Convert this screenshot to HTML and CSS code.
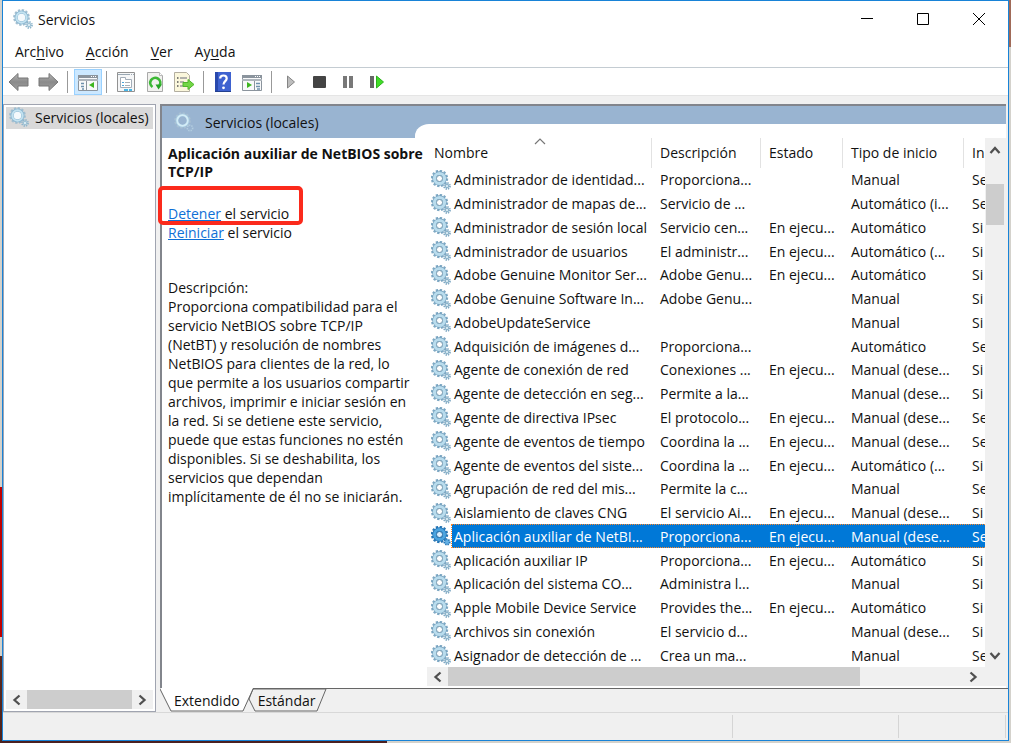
FILE: index.html
```
<!DOCTYPE html>
<html lang="es">
<head>
<meta charset="utf-8">
<title>Servicios</title>
<link rel="stylesheet" href="styles.css">
</head>
<body>
<svg class="defs" aria-hidden="true">
  <defs>
    <linearGradient id="arrowfill" x1="0" y1="0" x2="0" y2="1"><stop offset="0" stop-color="#b5b5b5"/><stop offset="0.5" stop-color="#8a8a8a"/><stop offset="1" stop-color="#a0a0a0"/></linearGradient>
    <symbol id="gear" viewBox="0 0 20 20">
      <circle cx="8.500" cy="8.500" r="7.500" fill="none" stroke="#7fa9c4" stroke-width="2.400" stroke-dasharray="2.300 1.627"/>
      <circle cx="8.500" cy="8.500" r="5" fill="none" stroke="#6f9cba" stroke-width="4.400"/>
      <circle cx="8.500" cy="8.500" r="5" fill="none" stroke="#b9dced" stroke-width="3.200"/>
      <circle cx="8.500" cy="8.500" r="3" fill="#fff" stroke="#7296ae" stroke-width="0.900"/>
      <circle cx="16" cy="16" r="3" fill="none" stroke="#7fa9c4" stroke-width="1.800" stroke-dasharray="1.300 1.056"/>
      <circle cx="16" cy="16" r="1.700" fill="#e4f2f8" stroke="#8db4ca" stroke-width="1.200"/>
    </symbol>
    <symbol id="gear-sel" viewBox="0 0 20 20">
      <circle cx="8.500" cy="8.500" r="7.500" fill="none" stroke="#2877b5" stroke-width="2.400" stroke-dasharray="2.300 1.627"/>
      <circle cx="8.500" cy="8.500" r="5" fill="none" stroke="#1d6fb3" stroke-width="4.400"/>
      <circle cx="8.500" cy="8.500" r="5" fill="none" stroke="#4ba4df" stroke-width="3"/>
      <circle cx="8.500" cy="8.500" r="3" fill="#d9efff" stroke="#20679f" stroke-width="0.900"/>
      <circle cx="16" cy="16" r="2.700" fill="#65b0e4" stroke="#2877b5" stroke-width="1.800" stroke-dasharray="1.300 1"/>
    </symbol>
    <symbol id="gear-soft" viewBox="0 0 20 20">
      <circle cx="8.500" cy="8.500" r="7.300" fill="none" stroke="#a3bfd0" stroke-width="2.200" stroke-dasharray="2.300 1.522"/>
      <circle cx="8.500" cy="8.500" r="5.400" fill="#f4f9fc" stroke="#8db8d2" stroke-width="3.200"/>
      <circle cx="8.500" cy="8.500" r="5.200" fill="none" stroke="#c3e2f0" stroke-width="1.900"/>
      <circle cx="16" cy="16" r="3" fill="none" stroke="#8fb5cc" stroke-width="1.800" stroke-dasharray="1.300 1.056"/>
      <circle cx="16" cy="16" r="1.700" fill="#e4f2f8" stroke="#9fc3d6" stroke-width="1.200"/>
    </symbol>
    <symbol id="gear-banner" viewBox="0 0 20 20">
      <circle cx="8.500" cy="8.500" r="7.300" fill="none" stroke="#a9bfd2" stroke-width="2" stroke-dasharray="2.300 1.522"/>
      <circle cx="8.500" cy="8.500" r="5.600" fill="none" stroke="#a4c8de" stroke-width="3"/>
      <circle cx="8.500" cy="8.500" r="5.300" fill="none" stroke="#d3ecf7" stroke-width="1.800"/>
      <circle cx="16" cy="16" r="2.700" fill="none" stroke="#b3cde0" stroke-width="1.600" stroke-dasharray="1.300 1"/>
    </symbol>
    <symbol id="chev-left" viewBox="0 0 10 12"><path d="M7.500 1.500 2.500 6l5 4.500" fill="none" stroke="#505050" stroke-width="2.300"/></symbol>
    <symbol id="chev-right" viewBox="0 0 10 12"><path d="M1.500 1.500 6.500 6l-5 4.500" fill="none" stroke="#505050" stroke-width="2.300"/></symbol>
  </defs>
</svg>
<main class="window">
  <header class="titlebar">
    <svg class="gear"><use href="#gear-soft"/></svg>
    <h1 class="title">Servicios</h1>
    <button class="caption" aria-label="Minimizar"><svg width="14" height="14"><path d="M1 6.500h12" stroke="#000"/></svg></button>
    <button class="caption" aria-label="Maximizar"><svg width="14" height="14"><path d="M1.500 1.500h11v11h-11z" fill="none" stroke="#000"/></svg></button>
    <button class="caption" aria-label="Cerrar"><svg width="14" height="14"><path d="M1 1l12 12M13 1 1 13" stroke="#000"/></svg></button>
  </header>
  <nav class="menubar">
    <button class="menu">Arc<u>h</u>ivo</button>
    <button class="menu"><u>A</u>cción</button>
    <button class="menu"><u>V</u>er</button>
    <button class="menu">Ay<u>u</u>da</button>
  </nav>
  <div class="toolbar">
    <button class="tool" aria-label="Atrás"><svg width="22" height="20"><path d="M1 10 10 1.500V6h10v8H10v4.500z" fill="url(#arrowfill)" stroke="#777"/></svg></button>
    <button class="tool" aria-label="Adelante"><svg width="22" height="20"><path d="M21 10 12 1.500V6H2v8h10v4.500z" fill="url(#arrowfill)" stroke="#777"/></svg></button>
    <span class="divider"></span>
    <button class="tool pressed" aria-label="Árbol de consola"><svg width="22" height="20"><path d="M1.500 3.500h19v15h-19z" fill="#f8f9fa" stroke="#8b949d"/><path d="M1 3h20v3H1z" fill="#8b949d"/><path d="M14 4.500h1m1 0h1m1 0h1" stroke="#fff"/><path d="M1 8h20" stroke="#aeb5bc" stroke-width="2"/><path d="M9.500 9v9" stroke="#8b949d"/><path d="M4 11.500h3M4 14.500h3M5 17h2" stroke="#6e91ad" stroke-width="1.500"/><path d="M17 10v6l-5-3z" fill="#3eb620"/></svg></button>
    <span class="divider"></span>
    <button class="tool" aria-label="Propiedades"><svg width="22" height="20"><path d="M2.500.500h17v19h-17z" fill="#f5f6f7" stroke="#929292"/><path d="M3 2.500h12M16 2.500h1m1 0h1" stroke="#9aa8b3"/><path d="M5.500 5.500h5v2h6v8h-11z" fill="#fff" stroke="#a3adb8"/><path d="M7 10.500h2M7 13.500h2" stroke="#4ba5d9"/><path d="M10 10.500h5M10 13.500h5" stroke="#a8afb6"/><path d="M9 18h4M14 18h3" stroke="#48b7e8" stroke-width="2"/></svg></button>
    <button class="tool" aria-label="Actualizar"><svg width="22" height="20"><path d="M3.500.500h12l3 3v16h-15z" fill="#f1f1ee" stroke="#a9a9a9"/><path d="M15.500.500v3h3" fill="#fff" stroke="#bbb"/><path d="M8.500 15A5 5 0 1 1 15.500 13.500" fill="none" stroke="#3cb835" stroke-width="2.700"/><path d="M11.500 12.500h6.500l-3.500 5z" fill="#27a427"/></svg></button>
    <button class="tool" aria-label="Exportar lista"><svg width="22" height="20"><path d="M1.500.500h12l3 3v16h-15z" fill="#fbf7dc" stroke="#b3aea0"/><path d="M4 6h1.500M4 10h1.500M4 14h1.500" stroke="#555" stroke-width="1.500"/><path d="M7 6h7M7 10h4M7 14h5" stroke="#9a9a9a" stroke-width="1.500"/><path d="M10 10.500h5V7.500l6 5-6 5v-3h-5z" fill="#72d645" stroke="#4fb52c"/></svg></button>
    <span class="divider"></span>
    <button class="tool" aria-label="Ayuda"><svg width="22" height="20"><path d="M3 0h16v20H3z" fill="#3e62d0"/><path d="M3 0h3v20H3z" fill="#2949ad"/><path d="M3 19.500h16" stroke="#23408f"/><path d="M8.200 6.500c0-4 6.500-4 6.500 0 0 2.500-3.200 2.800-3.200 6" fill="none" stroke="#fff" stroke-width="2.200"/><circle cx="11.500" cy="15.800" r="1.400" fill="#fff"/></svg></button>
    <button class="tool" aria-label="Panel de acciones"><svg width="22" height="20"><path d="M1.500 3.500h19v15h-19z" fill="#f8f9fa" stroke="#8b949d"/><path d="M1 3h20v3H1z" fill="#8b949d"/><path d="M14 4.500h1m1 0h1m1 0h1" stroke="#fff"/><path d="M1 8h20" stroke="#aeb5bc" stroke-width="2"/><path d="M13.500 9v9" stroke="#8b949d"/><path d="M15 11.500h4M15 14.500h4M16 17h3" stroke="#6e91ad" stroke-width="1.500"/><path d="M6 10v6l5-3z" fill="#3eb620"/></svg></button>
    <span class="divider"></span>
    <button class="tool" aria-label="Iniciar servicio"><svg width="22" height="20"><path d="M7.500 4v12l7-6z" fill="#bdbdbd" stroke="#858585"/></svg></button>
    <button class="tool" aria-label="Detener servicio"><svg width="22" height="20"><rect x="4" y="4" width="13" height="12" rx="1" fill="#444"/></svg></button>
    <button class="tool" aria-label="Pausar servicio"><svg width="22" height="20"><path d="M5 4h4v12H5zM11 4h4v12h-4z" fill="#787878"/></svg></button>
    <button class="tool" aria-label="Reiniciar servicio"><svg width="22" height="20"><path d="M3 4h4v12H3z" fill="#666"/><path d="M9.500 4v12l7-6z" fill="#41dc27" stroke="#2bb31b"/></svg></button>
  </div>
  <div class="panes">
    <aside class="tree">
      <div class="node"><svg class="gear"><use href="#gear-soft"/></svg><span>Servicios (locales)</span></div>
      <div class="hscroll">
        <button class="arrow" aria-label="Izquierda"><svg width="10" height="12"><use href="#chev-left"/></svg></button>
        <span class="thumb"></span>
        <button class="arrow" aria-label="Derecha"><svg width="10" height="12"><use href="#chev-right"/></svg></button>
      </div>
    </aside>
    <section class="right">
      <div class="content">
        <div class="banner"><svg class="gear"><use href="#gear-banner"/></svg><h2>Servicios (locales)</h2></div>
        <article class="info">
          <h3>Aplicación auxiliar de NetBIOS sobre<br>TCP/IP</h3>
          <p class="action marked"><a href="#">Detener</a> el servicio</p>
          <p class="action"><a href="#">Reiniciar</a> el servicio</p>
          <p class="about">Descripción:<br>Proporciona compatibilidad para el<br>servicio NetBIOS sobre TCP/IP<br>(NetBT) y resolución de nombres<br>NetBIOS para clientes de la red, lo<br>que permite a los usuarios compartir<br>archivos, imprimir e iniciar sesión en<br>la red. Si se detiene este servicio,<br>puede que estas funciones no estén<br>disponibles. Si se deshabilita, los<br>servicios que dependan<br>implícitamente de él no se iniciarán.</p>
        </article>
        <div class="list">
          <table class="services">
            <thead><tr><th class="sorted">Nombre<svg class="sort" width="12" height="7"><path d="M1 6l5-5 5 5" fill="none" stroke="#777" stroke-width="1.200"/></svg></th><th>Descripción</th><th>Estado</th><th>Tipo de inicio</th><th>In</th></tr></thead>
            <tbody>
              <tr><td><svg class="gear"><use href="#gear"/></svg>Administrador de identidad...</td><td>Proporciona...</td><td></td><td>Manual</td><td>Se</td></tr>
              <tr><td><svg class="gear"><use href="#gear"/></svg>Administrador de mapas de...</td><td>Servicio de ...</td><td></td><td>Automático (i...</td><td>Se</td></tr>
              <tr><td><svg class="gear"><use href="#gear"/></svg>Administrador de sesión local</td><td>Servicio cen...</td><td>En ejecu...</td><td>Automático</td><td>Si</td></tr>
              <tr><td><svg class="gear"><use href="#gear"/></svg>Administrador de usuarios</td><td>El administr...</td><td>En ejecu...</td><td>Automático (...</td><td>Si</td></tr>
              <tr><td><svg class="gear"><use href="#gear"/></svg>Adobe Genuine Monitor Ser...</td><td>Adobe Genu...</td><td>En ejecu...</td><td>Automático</td><td>Si</td></tr>
              <tr><td><svg class="gear"><use href="#gear"/></svg>Adobe Genuine Software In...</td><td>Adobe Genu...</td><td></td><td>Manual</td><td>Si</td></tr>
              <tr><td><svg class="gear"><use href="#gear"/></svg>AdobeUpdateService</td><td></td><td></td><td>Manual</td><td>Si</td></tr>
              <tr><td><svg class="gear"><use href="#gear"/></svg>Adquisición de imágenes d...</td><td>Proporciona...</td><td></td><td>Automático</td><td>Se</td></tr>
              <tr><td><svg class="gear"><use href="#gear"/></svg>Agente de conexión de red</td><td>Conexiones ...</td><td>En ejecu...</td><td>Manual (dese...</td><td>Si</td></tr>
              <tr><td><svg class="gear"><use href="#gear"/></svg>Agente de detección en seg...</td><td>Permite a la...</td><td></td><td>Manual (dese...</td><td>Si</td></tr>
              <tr><td><svg class="gear"><use href="#gear"/></svg>Agente de directiva IPsec</td><td>El protocolo...</td><td>En ejecu...</td><td>Manual (dese...</td><td>Se</td></tr>
              <tr><td><svg class="gear"><use href="#gear"/></svg>Agente de eventos de tiempo</td><td>Coordina la ...</td><td>En ejecu...</td><td>Manual (dese...</td><td>Se</td></tr>
              <tr><td><svg class="gear"><use href="#gear"/></svg>Agente de eventos del siste...</td><td>Coordina la ...</td><td>En ejecu...</td><td>Automático (...</td><td>Si</td></tr>
              <tr><td><svg class="gear"><use href="#gear"/></svg>Agrupación de red del mis...</td><td>Permite la c...</td><td></td><td>Manual</td><td>Se</td></tr>
              <tr><td><svg class="gear"><use href="#gear"/></svg>Aislamiento de claves CNG</td><td>El servicio Ai...</td><td>En ejecu...</td><td>Manual (dese...</td><td>Si</td></tr>
              <tr class="selected"><td><svg class="gear"><use href="#gear-sel"/></svg>Aplicación auxiliar de NetBI...</td><td>Proporciona...</td><td>En ejecu...</td><td>Manual (dese...</td><td>Se</td></tr>
              <tr><td><svg class="gear"><use href="#gear"/></svg>Aplicación auxiliar IP</td><td>Proporciona...</td><td>En ejecu...</td><td>Automático</td><td>Si</td></tr>
              <tr><td><svg class="gear"><use href="#gear"/></svg>Aplicación del sistema CO...</td><td>Administra l...</td><td></td><td>Manual</td><td>Si</td></tr>
              <tr><td><svg class="gear"><use href="#gear"/></svg>Apple Mobile Device Service</td><td>Provides the...</td><td>En ejecu...</td><td>Automático</td><td>Si</td></tr>
              <tr><td><svg class="gear"><use href="#gear"/></svg>Archivos sin conexión</td><td>El servicio d...</td><td></td><td>Manual (dese...</td><td>Si</td></tr>
              <tr><td><svg class="gear"><use href="#gear"/></svg>Asignador de detección de ...</td><td>Crea un ma...</td><td></td><td>Manual</td><td>Se</td></tr>
            </tbody>
          </table>
          <div class="vscroll">
            <button class="arrow" aria-label="Arriba"><svg width="12" height="10"><path d="M1.500 8 6 3l4.500 5" fill="none" stroke="#505050" stroke-width="2.300"/></svg></button>
            <span class="thumb"></span>
            <button class="arrow" aria-label="Abajo"><svg width="12" height="10"><path d="M1.500 2 6 7l4.500-5" fill="none" stroke="#505050" stroke-width="2.300"/></svg></button>
          </div>
          <div class="hscroll wide">
            <button class="arrow" aria-label="Izquierda"><svg width="10" height="12"><use href="#chev-left"/></svg></button>
            <span class="thumb"></span>
            <button class="arrow" aria-label="Derecha"><svg width="10" height="12"><use href="#chev-right"/></svg></button>
          </div>
        </div>
      </div>
      <div class="tabs">
        <svg class="tabshape" width="170" height="24" aria-hidden="true"><path d="M93 1h73l-9 22H95l-6-12z" fill="#f0f0f0" stroke="#666"/><path d="M0 0 11 23h72L93 0z" fill="#fff"/><path d="M0 1 11 23h72L93 1" fill="none" stroke="#666"/></svg>
        <button class="tab">Extendido</button>
        <button class="tab">Estándar</button>
      </div>
    </section>
  </div>
  <footer class="status"><span></span><span></span><span></span></footer>
</main>
</body>
</html>
```
FILE: styles.css
```
*, *::after { box-sizing: border-box; }
body {
  margin: 0;
  height: 100vh;
  padding: 0 2px 2px;
  font: 14px/19px "Open Sans", "Noto Sans", sans-serif;
  color: #111;
  background:
    linear-gradient(#c00000, #c00000) 0 487px / 2px 150px no-repeat,
    linear-gradient(#5a2a20, #4a211c) 0 656px / 2px 100px no-repeat,
    linear-gradient(#a06a58, #a06a58) 100% 0 / 2px 47px no-repeat,
    linear-gradient(#4a2020, #4a2020) 0 100% / 387px 2px no-repeat,
    #d4d2cc;
}
button { margin: 0; padding: 0; border: 0; background: none; color: inherit; font: inherit; }
h1, h2, h3, p { margin: 0; font: inherit; }
svg { display: block; flex: none; }
.defs { position: absolute; width: 0; height: 0; }
.gear { width: 20px; height: 20px; }
.window { display: flex; flex-direction: column; height: 100%; border: 1px solid #1883d7; background: #f0f0f0; }
.titlebar { display: flex; align-items: center; height: 36px; padding-left: 10px; background: #fff; }
.title { flex: 1; padding-left: 5px; }
.caption { display: grid; place-items: center; width: 56px; height: 36px; }
.caption:last-child { margin-right: 1px; }
.menubar { display: flex; gap: 22px; height: 31px; padding: 0 0 2px 12px; background: #fff; border-bottom: 1px solid #c4ccd2; }
.menu { height: 28px; padding-top: 1px; }
.menu u { text-underline-offset: 2px; }
.toolbar { display: flex; align-items: center; gap: 7px; height: 28px; padding-left: 5px; background: #fff; border-bottom: 1px solid #e5e5e5; }
.tool { display: grid; place-items: center; width: 22px; height: 26px; }
.pressed { width: 28px; margin: 0 -4px 0 -2px; background: #cce8ff; outline: 1px solid #99d1ff; outline-offset: -1px; }
.divider { width: 1px; height: 22px; margin: 0 1px; background: #999; }
.panes { flex: 1; display: flex; gap: 4px; min-height: 0; padding-top: 8px; }
.tree { display: flex; flex-direction: column; justify-content: space-between; width: 153px; padding: 2px; border: 1px solid #a0a4b0; background: #fff; }
.node { display: flex; align-items: center; gap: 6px; height: 22px; padding: 0 0 2px 3px; background: #d9d9d9; white-space: nowrap; }
.hscroll { display: flex; height: 19px; background: #f0f0f0; }
.arrow { display: grid; place-items: center; flex: none; width: 21px; height: 19px; }
.hscroll .thumb { flex: 1; background: #cdcdcd; }
.right { flex: 1; min-width: 0; display: flex; flex-direction: column; }
.content {
  flex: 1; min-height: 0; display: grid; margin-right: 2px;
  grid-template: 32px 1fr / 265px 1fr;
  border: solid #82858c; border-width: 2px 0 0 2px; background: #fff;
}
.banner {
  grid-area: 1 / 1 / 2 / 3; display: flex; align-items: center; gap: 11px; padding-left: 12px;
  background: #99b4d1;
}
.info { grid-area: 2 / 1; position: relative; z-index: 1; padding: 7px 0 0 6px; white-space: nowrap; }
.info h3 { font-weight: 700; font-size: 14px; line-height: 18px; margin-bottom: 23px; }
.action a { color: #0f6fd6; }
.marked { position: relative; }
.marked::after { content: ""; position: absolute; left: -10px; top: -18px; width: 145px; height: 39px; border: 4px solid #fb2a1c; border-radius: 5px; }
.about { margin-top: 36px; }
.list {
  grid-area: 1 / 2 / 3 / 3; display: grid; min-width: 0; min-height: 0;
  grid-template: minmax(0, 1fr) 19px / minmax(0, 1fr) 21px;
  margin: 18px 0 2px -12px; padding: 14px 0 0 12px;
  border-top-left-radius: 14px 12px; background: #fff;
}
.services { display: grid; grid-template-rows: 30px minmax(0, 1fr); min-width: 0; overflow: hidden; white-space: nowrap; }
.services thead { display: grid; }
.services tbody { display: grid; grid-auto-rows: minmax(0, 1fr); min-height: 0; }
.services tr { display: grid; grid-template-columns: 225px 109px 82px 121px minmax(0, 1fr); align-items: center; min-width: 0; }
.services th { height: 30px; padding: 0 8px; border-right: 1px solid #e2e2e2; font-weight: 400; text-align: left; line-height: 29px; }
.services th:first-child { padding-left: 7px; }
.services th:last-child { padding-right: 0; border: 0; }
.sorted { position: relative; }
.sort { position: absolute; left: 107px; top: 0; }
.services td { display: flex; align-items: center; height: 100%; padding: 0 0 0 8px; overflow: hidden; }
.services td:first-child { gap: 3px; padding-left: 4px; }
.selected { color: #fff; background: linear-gradient(#0078d7, #0078d7) 25px 0 no-repeat; position: relative; }
.selected::after { content: ""; position: absolute; inset: 0 0 0 24px; border: 1px dotted #ff8728; border-right: 0; }
.vscroll { display: flex; flex-direction: column; align-items: center; padding-right: 2px; background: #f0f0f0; }
.vscroll .arrow { height: 23px; }
.vscroll .thumb { width: 18px; height: 41px; margin: 23px 0 auto; background: #cdcdcd; }
.wide { grid-column: 1 / 3; }
.wide .thumb { flex: 0 1 412px; margin-right: auto; }
.wide .arrow:last-child { margin-right: 22px; }
.tabs { position: relative; display: flex; gap: 18px; height: 24px; padding-left: 14px; border-top: 1px solid #666; }
.tabshape { position: absolute; left: 0; top: -1px; }
.tab { position: relative; height: 23px; }
.status { display: flex; height: 28px; border-top: 1px solid #d8d8d8; }
.status span { border-right: 1px solid #d5d5d5; margin: 2px 0; }
.status span:nth-child(1) { flex: 1; }
.status span:nth-child(2) { width: 166px; }
.status span:nth-child(3) { width: 107px; margin-right: 2px; }
```
